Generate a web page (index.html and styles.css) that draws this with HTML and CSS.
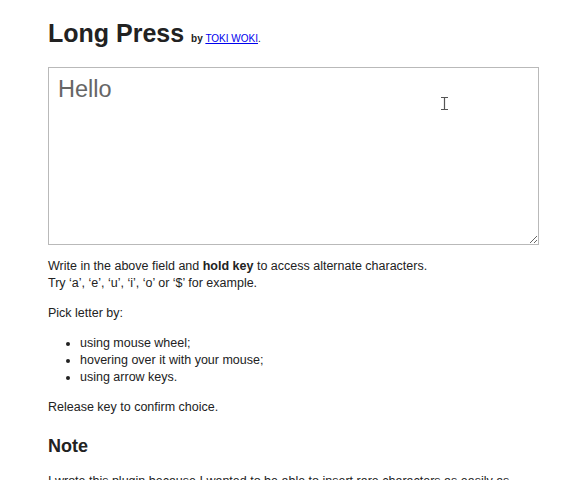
FILE: index.html
```html
<!DOCTYPE html>
<html lang="en">
<head>
<meta charset="utf-8">
<title>Long Press</title>
<link rel="stylesheet" href="styles.css">
</head>
<body>
<main class="page">
  <h1 class="title">Long Press <small class="byline"><b>by</b> <a href="#">TOKI WOKI</a>.</small></h1>
  <div class="field">
    <textarea class="input">Hello</textarea>
    <svg class="ibeam" width="9" height="15" viewBox="0 0 9 15" aria-hidden="true">
      <path d="M1 1.5h7M4.5 1.5v12M1 13.5h7" stroke="#555" stroke-width="1.2" fill="none"/>
    </svg>
  </div>
  <p class="text">Write in the above field and <b>hold key</b> to access alternate characters.<br>Try ‘a’, ‘e’, ‘u’, ‘i’, ‘o’ or ‘$’ for example.</p>
  <p class="text">Pick letter by:</p>
  <ul class="list">
    <li>using mouse wheel;</li>
    <li>hovering over it with your mouse;</li>
    <li>using arrow keys.</li>
  </ul>
  <p class="text">Release key to confirm choice.</p>
  <h2 class="sub">Note</h2>
  <p class="text note">I wrote this plugin because I wanted to be able to insert rare characters as easily as on a mobile phone.</p>
</main>
</body>
</html>
```
FILE: styles.css
```css
html, body {
  margin: 0;
  padding: 0;
  background: #fff;
}
body {
  font-family: "Liberation Sans", Arial, sans-serif;
  color: #222;
  font-size: 12.5px;
  line-height: 17px;
}
.page {
  padding-left: 48px;
  width: 491px;
}
.title {
  font-size: 25px;
  line-height: 30px;
  font-weight: bold;
  margin: 18px 0 19px;
  color: #222;
}
.byline {
  font-size: 10px;
  line-height: 1;
  font-weight: normal;
}
.byline a {
  color: #00e;
  text-decoration: underline;
}
.field {
  position: relative;
  width: 491px;
}
.input {
  display: block;
  box-sizing: border-box;
  width: 491px;
  height: 178px;
  margin: 0;
  padding: 8px 9px;
  border: 1px solid #b9b9b9;
  font-family: "Liberation Sans", Arial, sans-serif;
  font-size: 23.5px;
  color: #666;
  resize: both;
  outline: none;
}
.ibeam {
  position: absolute;
  left: 392px;
  top: 29px;
}
.text {
  margin: 13px 0;
}
.note {
  max-width: 462px;
}
.list {
  margin: 13px 0;
  padding-left: 32px;
}
.sub {
  font-size: 18px;
  line-height: 21px;
  font-weight: bold;
  margin: 20px 0 16px;
}
```
